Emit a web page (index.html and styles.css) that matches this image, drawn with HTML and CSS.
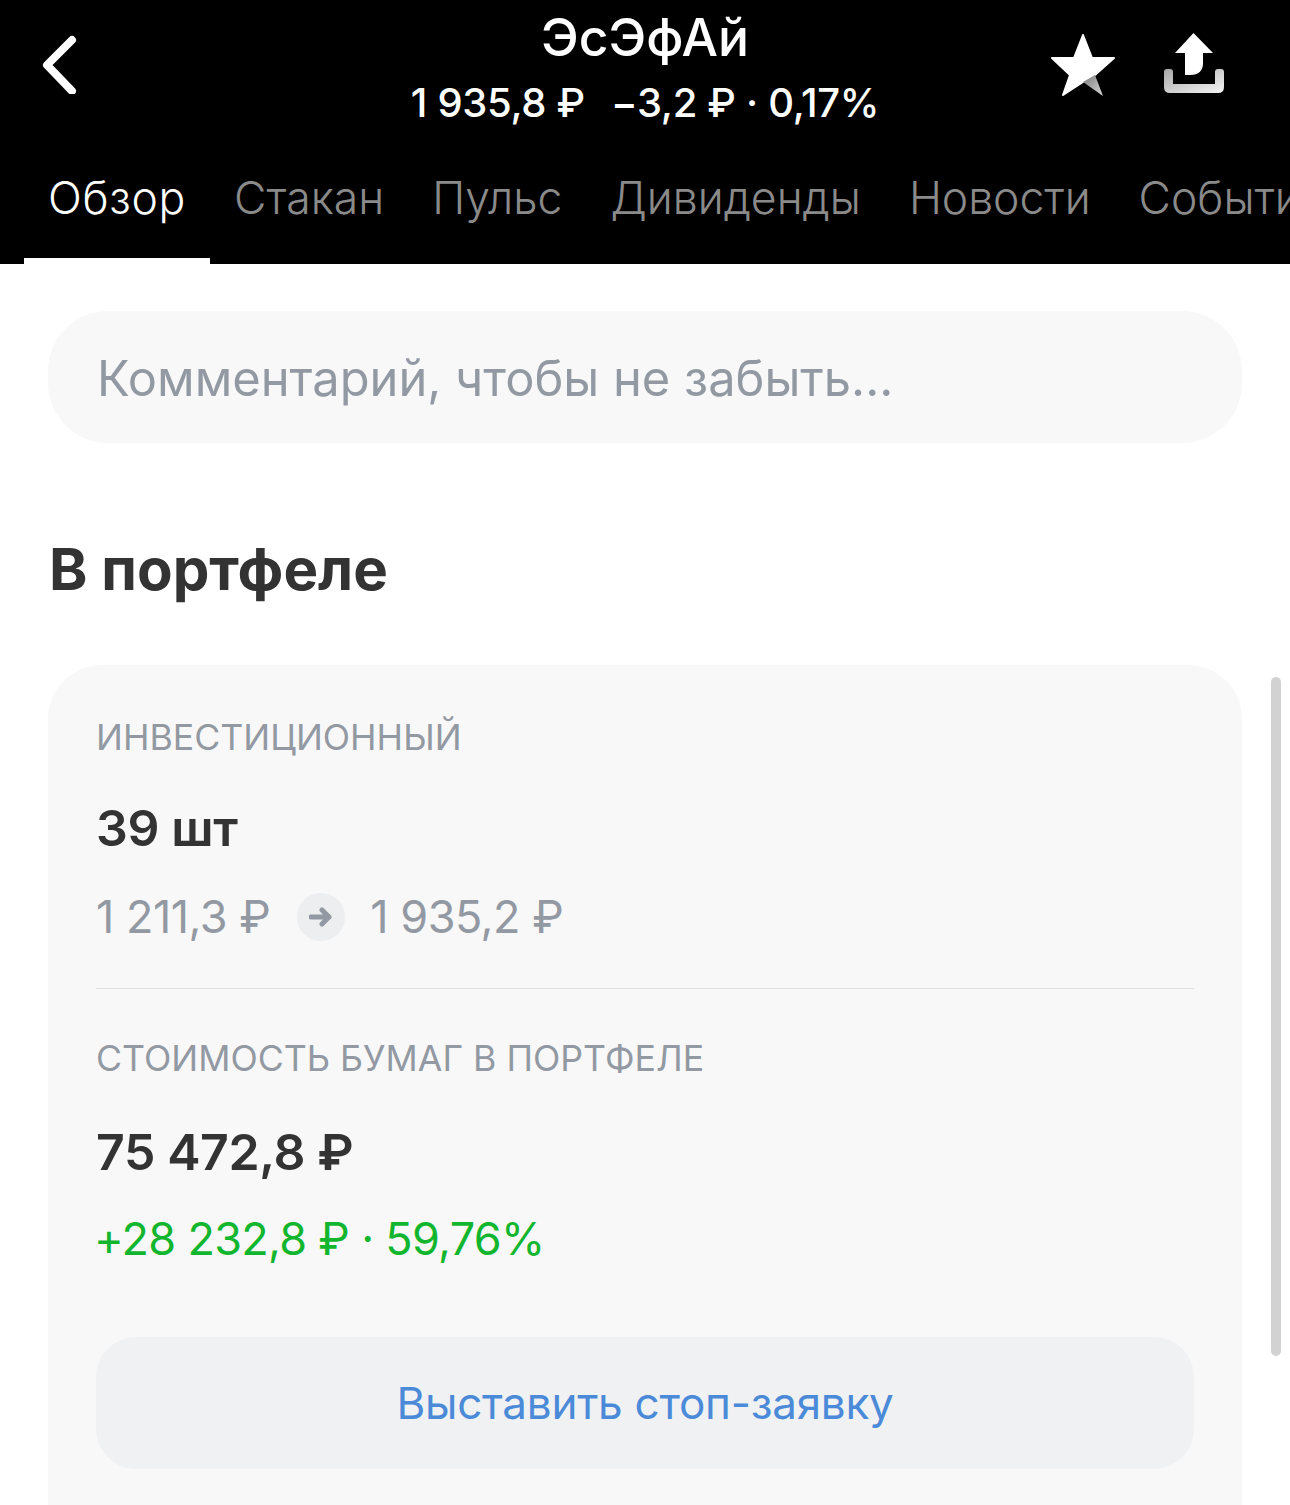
FILE: index.html
```html
<!DOCTYPE html>
<html lang="ru">
<head>
  <meta charset="UTF-8">
  <meta name="viewport" content="width=device-width, initial-scale=1.0">
  <title>ЭсЭфАй</title>
  <link rel="stylesheet" href="styles.css">
</head>
<body>
  <header class="header">
    <div class="top-bar">
      <div class="top-left">
        <svg class="back-icon" viewBox="0 0 36 60" aria-hidden="true">
          <path d="M31 6 L6 31 L31 57" />
        </svg>
      </div>
      <div class="title-block">
        <div class="title">ЭсЭфАй</div>
        <div class="subtitle"><span class="price">1 935,8 ₽</span><span>−3,2 ₽ · 0,17%</span></div>
      </div>
      <div class="top-right">
        <svg class="star-icon" viewBox="0 0 66 64" aria-hidden="true">
          <defs>
            <linearGradient id="starFade" x1="0" y1="0" x2="1" y2="1">
              <stop offset="0" stop-color="#7a7a7a" />
              <stop offset="1" stop-color="#d8d8d8" />
            </linearGradient>
          </defs>
          <path class="star-body" d="M33 1 L42 24 L64 24 L45 41 L33 48 L13 61 L20 41 L2 24 L24 24 Z" />
          <path fill="url(#starFade)" d="M33 48 L45 41 L53 62 Z" />
        </svg>
        <svg class="share-icon" viewBox="0 0 60 62" aria-hidden="true">
          <defs>
            <linearGradient id="trayFade" x1="0" y1="0" x2="1" y2="1">
              <stop offset="0" stop-color="#a8a8a8" />
              <stop offset="1" stop-color="#f4f4f4" />
            </linearGradient>
          </defs>
          <path fill="#fff" d="M29.5 0 L49 20 L39 20 L39 30 Q39 42 26 42 L21 42 L21 20 L11 20 Z" />
          <path fill="url(#trayFade)" d="M0 39 Q0 36 3 36 L6 36 Q9 36 9 39 L9 51 L51 51 L51 39 Q51 36 54 36 L57 36 Q60 36 60 39 L60 54 Q60 60 54 60 L6 60 Q0 60 0 54 Z" />
        </svg>
      </div>
    </div>
    <nav class="tabs">
      <a class="tab tab-active">Обзор</a>
      <a class="tab">Стакан</a>
      <a class="tab">Пульс</a>
      <a class="tab">Дивиденды</a>
      <a class="tab">Новости</a>
      <a class="tab">События</a>
    </nav>
  </header>

  <main class="content">
    <div class="comment">Комментарий, чтобы не забыть...</div>

    <h2 class="section-title">В портфеле</h2>

    <section class="card">
      <div class="card-label">ИНВЕСТИЦИОННЫЙ</div>
      <div class="card-value">39 шт</div>
      <div class="price-row">
        <span>1 211,3 ₽</span>
        <span class="arrow-badge">
          <svg class="arrow-icon" viewBox="0 0 24 20" aria-hidden="true">
            <path d="M2 10 H20 M13 3 L20 10 L13 17" />
          </svg>
        </span>
        <span>1 935,2 ₽</span>
      </div>
      <div class="divider"></div>
      <div class="card-label">СТОИМОСТЬ БУМАГ В ПОРТФЕЛЕ</div>
      <div class="card-value card-value-total">75 472,8 ₽</div>
      <div class="profit">+28 232,8 ₽ · 59,76%</div>
      <button class="stop-button">Выставить стоп-заявку</button>
    </section>
  </main>

  <div class="scrollbar"></div>
</body>
</html>
```

FILE: styles.css
```css
* {
  box-sizing: border-box;
}

body {
  margin: 0;
  height: 1505px;
  overflow: hidden;
  position: relative;
  background-color: #fff;
  font-family: 'Inter', 'Liberation Sans', sans-serif;
  color: #333;
}

.header {
  height: 264px;
  background-color: #000;
  color: #fff;
  overflow: hidden;
}

.top-bar {
  height: 153px;
  display: grid;
  grid-template-columns: 1fr auto 1fr;
  align-items: start;
}

.top-left {
  padding-left: 41px;
}

.top-right {
  display: flex;
  justify-content: flex-end;
  padding-right: 66px;
}

.back-icon {
  display: block;
  width: 36px;
  height: 60px;
  margin-top: 34px;
  fill: none;
  stroke: #fff;
  stroke-width: 8;
  stroke-linecap: round;
  stroke-linejoin: round;
}

.title-block {
  text-align: center;
  padding-top: 9px;
}

.title {
  font-size: 51.5px;
  line-height: 56px;
  font-weight: 500;
}

.subtitle {
  margin-top: 14px;
  font-size: 40px;
  line-height: 48px;
  font-weight: 500;
  letter-spacing: -0.3px;
}

.price {
  margin-right: 26px;
}

.star-icon {
  width: 66px;
  height: 64px;
  margin-top: 34px;
  flex-shrink: 0;
}

.star-body {
  fill: #fff;
  stroke: #fff;
  stroke-width: 2;
  stroke-linejoin: round;
}

.share-icon {
  width: 60px;
  height: 62px;
  margin-top: 33px;
  margin-left: 48px;
  flex-shrink: 0;
}

.tabs {
  display: flex;
  padding-left: 24px;
  height: 111px;
  white-space: nowrap;
}

.tab {
  padding: 15px 24px 0;
  font-size: 44.5px;
  line-height: 60px;
  font-weight: 300;
  color: #8a8a8a;
}

.tab-active {
  color: #fff;
  border-bottom: 6px solid #fff;
  letter-spacing: 0.7px;
}

.content {
  padding: 47px 48px 0;
}

.comment {
  height: 132px;
  padding: 0 49px;
  border-radius: 60px;
  background-color: #f8f8f9;
  color: #9299a2;
  font-size: 48.8px;
  line-height: 136px;
}

.section-title {
  margin: 92px 0 0 1px;
  font-size: 58.2px;
  line-height: 68px;
  font-weight: 700;
  color: #333;
}

.card {
  margin-top: 62px;
  height: 900px;
  padding: 50px 48px 0;
  border-radius: 54px;
  background-color: #f8f8f9;
}

.card-label {
  font-size: 35.7px;
  line-height: 44px;
  color: #9299a2;
}

.card-value {
  margin-top: 37px;
  font-size: 50px;
  line-height: 64px;
  font-weight: 600;
  letter-spacing: -0.4px;
  color: #333;
}

.card-value-total {
  margin-top: 40px;
}

.price-row {
  display: flex;
  align-items: center;
  gap: 25px;
  margin-top: 29px;
  font-size: 45px;
  line-height: 56px;
  letter-spacing: -0.5px;
  color: #9299a2;
}

.arrow-badge {
  width: 48px;
  height: 48px;
  margin-left: 2px;
  border-radius: 50%;
  background-color: #eceef0;
  display: flex;
  align-items: center;
  justify-content: center;
}

.arrow-icon {
  width: 24px;
  height: 20px;
  fill: none;
  stroke: #9299a2;
  stroke-width: 5;
  stroke-linecap: round;
  stroke-linejoin: round;
}

.divider {
  height: 1px;
  margin: 43px 0 47px;
  background-color: #dddfe2;
}

.profit {
  margin: 27px 0 0 -2px;
  font-size: 45px;
  line-height: 56px;
  letter-spacing: -0.7px;
  color: #12b62e;
}

.stop-button {
  display: block;
  width: 100%;
  height: 132px;
  margin-top: 70px;
  border: none;
  border-radius: 40px;
  background-color: #f0f1f3;
  color: #4a8ad8;
  font-family: inherit;
  font-size: 44px;
  letter-spacing: -0.25px;
}

.scrollbar {
  position: absolute;
  top: 677px;
  left: 1271px;
  width: 10px;
  height: 679px;
  border-radius: 5px;
  background-color: #d2d2d2;
}
```
